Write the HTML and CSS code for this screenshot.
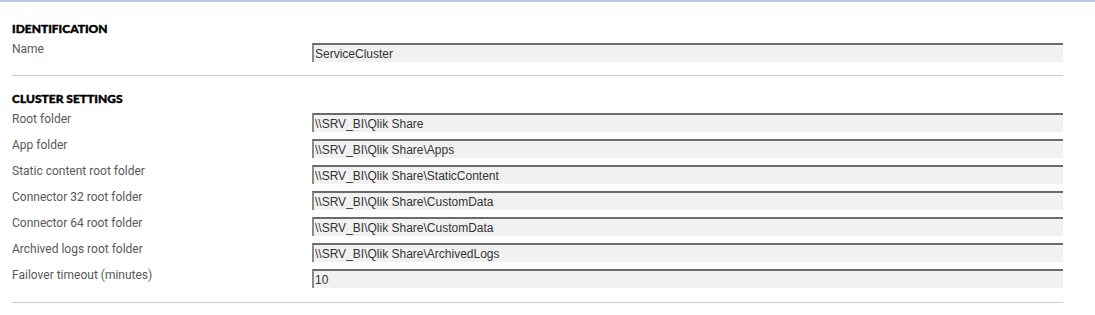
FILE: index.html
```html
<!DOCTYPE html>
<html lang="en">
<head>
  <meta charset="UTF-8">
  <meta name="viewport" content="width=device-width, initial-scale=1.0">
  <title>Service cluster</title>
  <link rel="stylesheet" href="styles.css">
</head>
<body>
  <div class="page">
    <section class="group first">
      <h2>IDENTIFICATION</h2>
      <div class="rows">
        <div class="row">
          <label>Name</label>
          <input type="text" class="field" value="ServiceCluster" readonly>
        </div>
      </div>
    </section>

    <section class="group">
      <h2>CLUSTER SETTINGS</h2>
      <div class="rows">
        <div class="row">
          <label>Root folder</label>
          <input type="text" class="field" value="\\SRV_BI\Qlik Share" readonly>
        </div>
        <div class="row">
          <label>App folder</label>
          <input type="text" class="field" value="\\SRV_BI\Qlik Share\Apps" readonly>
        </div>
        <div class="row">
          <label>Static content root folder</label>
          <input type="text" class="field" value="\\SRV_BI\Qlik Share\StaticContent" readonly>
        </div>
        <div class="row">
          <label>Connector 32 root folder</label>
          <input type="text" class="field" value="\\SRV_BI\Qlik Share\CustomData" readonly>
        </div>
        <div class="row">
          <label>Connector 64 root folder</label>
          <input type="text" class="field" value="\\SRV_BI\Qlik Share\CustomData" readonly>
        </div>
        <div class="row">
          <label>Archived logs root folder</label>
          <input type="text" class="field" value="\\SRV_BI\Qlik Share\ArchivedLogs" readonly>
        </div>
        <div class="row">
          <label>Failover timeout (minutes)</label>
          <input type="text" class="field" value="10" readonly>
        </div>
      </div>
    </section>
  </div>
</body>
</html>
```

FILE: styles.css
```css
body {
  margin: 0;
  font-family: Roboto, sans-serif;
  background: #ffffff;
  border-top: 2px solid #b3cce6;
}

.page {
  padding: 0 32px 0 12px;
}

.group {
  padding: 16px 0 14px;
  border-bottom: 1px solid #cccccc;
}

.group.first {
  padding-top: 20px;
  padding-bottom: 13px;
}

h2 {
  margin: 0 0 7px;
  font-family: Lato, sans-serif;
  font-weight: 900;
  font-size: 12px;
  line-height: 14px;
  color: #000000;
  -webkit-text-stroke: 0.4px #000000;
}

.rows {
  display: flex;
  flex-direction: column;
  gap: 7px;
}

.row {
  display: flex;
  align-items: flex-start;
}

.row label {
  width: 300px;
  flex-shrink: 0;
  font-size: 12px;
  line-height: 12px;
  color: #595959;
}

.field {
  flex: 1;
  box-sizing: border-box;
  height: 19px;
  margin: 0;
  padding: 1px 0 0 1px;
  border: none;
  border-top: 2px solid #6b6b6b;
  border-left: 2px solid #8a8a8a;
  background: #f1f1f1;
  font-family: "Liberation Sans", Arial, sans-serif;
  font-size: 12px;
  color: #333333;
  outline: none;
}
```
